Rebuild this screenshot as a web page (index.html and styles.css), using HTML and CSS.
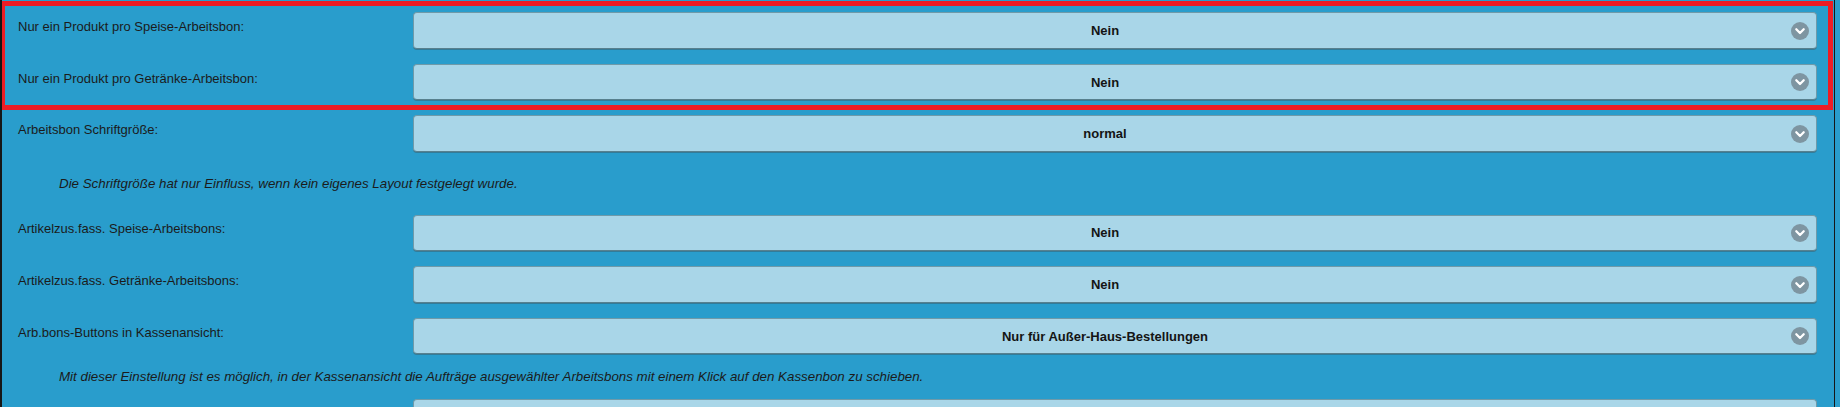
FILE: index.html
```html
<!DOCTYPE html>
<html lang="de">
<head>
<meta charset="utf-8">
<title>Arbeitsbon Einstellungen</title>
<link rel="stylesheet" href="styles.css">
</head>
<body>
<div class="page">
  <div class="settings">
    <div class="row">
      <div class="label">Nur ein Produkt pro Speise-Arbeitsbon:</div>
      <div class="select"><span class="value">Nein</span><svg class="chev" viewBox="0 0 18 18" width="18" height="18"><circle cx="9" cy="9" r="9"/><polyline points="5.3,7.3 9,11 12.7,7.3"/></svg></div>
    </div>
    <div class="row">
      <div class="label">Nur ein Produkt pro Getränke-Arbeitsbon:</div>
      <div class="select"><span class="value">Nein</span><svg class="chev" viewBox="0 0 18 18" width="18" height="18"><circle cx="9" cy="9" r="9"/><polyline points="5.3,7.3 9,11 12.7,7.3"/></svg></div>
    </div>
    <div class="row">
      <div class="label">Arbeitsbon Schriftgröße:</div>
      <div class="select"><span class="value">normal</span><svg class="chev" viewBox="0 0 18 18" width="18" height="18"><circle cx="9" cy="9" r="9"/><polyline points="5.3,7.3 9,11 12.7,7.3"/></svg></div>
    </div>
    <div class="hint hint-wide">Die Schriftgröße hat nur Einfluss, wenn kein eigenes Layout festgelegt wurde.</div>
    <div class="row">
      <div class="label">Artikelzus.fass. Speise-Arbeitsbons:</div>
      <div class="select"><span class="value">Nein</span><svg class="chev" viewBox="0 0 18 18" width="18" height="18"><circle cx="9" cy="9" r="9"/><polyline points="5.3,7.3 9,11 12.7,7.3"/></svg></div>
    </div>
    <div class="row">
      <div class="label">Artikelzus.fass. Getränke-Arbeitsbons:</div>
      <div class="select"><span class="value">Nein</span><svg class="chev" viewBox="0 0 18 18" width="18" height="18"><circle cx="9" cy="9" r="9"/><polyline points="5.3,7.3 9,11 12.7,7.3"/></svg></div>
    </div>
    <div class="row">
      <div class="label">Arb.bons-Buttons in Kassenansicht:</div>
      <div class="select"><span class="value">Nur für Außer-Haus-Bestellungen</span><svg class="chev" viewBox="0 0 18 18" width="18" height="18"><circle cx="9" cy="9" r="9"/><polyline points="5.3,7.3 9,11 12.7,7.3"/></svg></div>
    </div>
    <div class="hint">Mit dieser Einstellung ist es möglich, in der Kassenansicht die Aufträge ausgewählter Arbeitsbons mit einem Klick auf den Kassenbon zu schieben.</div>
    <div class="row">
      <div class="label"></div>
      <div class="select"><span class="value"></span></div>
    </div>
  </div>
  <div class="highlight"></div>
</div>
</body>
</html>
```
FILE: styles.css
```css
html, body {
  margin: 0;
  padding: 0;
  background: #299dcc;
  height: 407px;
  overflow: hidden;
}
body {
  font-family: "Liberation Sans", Arial, sans-serif;
  font-size: 13px;
  color: #1b1b1b;
}
.page {
  position: relative;
  width: 1832px;
  height: 407px;
  overflow: hidden;
  border-left: 2px solid #161616;
  border-right: 1px solid #161616;
  background: #299dcc;
}
.settings {
  padding-top: 4.8px;
}
.row {
  display: flex;
  align-items: flex-start;
  padding: 7.5px 17px 7.5px 0;
}
.label {
  width: 395px;
  flex: none;
  padding-left: 16px;
  padding-top: 6.7px;
  line-height: 15px;
  white-space: nowrap;
}
.select {
  flex: 1;
  height: 34.6px;
  box-sizing: content-box;
  display: flex;
  align-items: center;
  position: relative;
  background: #a9d6e8;
  border: 1px solid #6f9aa9;
  border-bottom-color: #58808e;
  border-radius: 4px;
  box-shadow: 0 1px 0 rgba(60, 95, 110, 0.55);
  padding: 0 30px 0 10px;
}
.value {
  flex: 1;
  text-align: center;
  font-weight: bold;
  color: #141414;
  line-height: 15px;
}
.chev {
  position: absolute;
  right: 7px;
  top: 50%;
  margin-top: -9px;
}
.chev circle {
  fill: #7e95a1;
}
.chev polyline {
  fill: none;
  stroke: #ffffff;
  stroke-width: 2.3;
  stroke-linecap: round;
  stroke-linejoin: round;
}
.hint {
  padding: 7.25px 0 7.25px 57px;
  font-size: 13.33px;
  font-style: italic;
  line-height: 15px;
  white-space: nowrap;
}
.hint-wide {
  padding-top: 16.3px;
  padding-bottom: 16.3px;
}
.highlight {
  position: absolute;
  left: -2px;
  top: 1px;
  width: 1823px;
  height: 99px;
  border: 5px solid #ed1c24;
  pointer-events: none;
}
```
